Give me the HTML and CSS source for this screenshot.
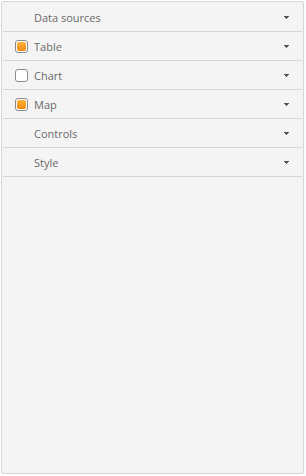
FILE: index.html
```html
<!DOCTYPE html>
<html>
<head>
    <meta name="viewport" content="width=device-width, initial-scale=1.0">
    <link rel="stylesheet" href="styles.css">
    <title>Panel</title>
</head>
<body>
    <div class="panel">
        <div class="row">
            <span class="label no-check">Data sources</span>
            <svg class="arrow" width="5" height="3" viewBox="0 0 5 3" shape-rendering="crispEdges"><rect x="0" y="0" width="5" height="1"/><rect x="1" y="1" width="3" height="1"/><rect x="2" y="2" width="1" height="1"/></svg>
        </div>
        <div class="row">
            <span class="check on"></span>
            <span class="label">Table</span>
            <svg class="arrow" width="5" height="3" viewBox="0 0 5 3" shape-rendering="crispEdges"><rect x="0" y="0" width="5" height="1"/><rect x="1" y="1" width="3" height="1"/><rect x="2" y="2" width="1" height="1"/></svg>
        </div>
        <div class="row">
            <span class="check"></span>
            <span class="label">Chart</span>
            <svg class="arrow" width="5" height="3" viewBox="0 0 5 3" shape-rendering="crispEdges"><rect x="0" y="0" width="5" height="1"/><rect x="1" y="1" width="3" height="1"/><rect x="2" y="2" width="1" height="1"/></svg>
        </div>
        <div class="row">
            <span class="check on"></span>
            <span class="label">Map</span>
            <svg class="arrow" width="5" height="3" viewBox="0 0 5 3" shape-rendering="crispEdges"><rect x="0" y="0" width="5" height="1"/><rect x="1" y="1" width="3" height="1"/><rect x="2" y="2" width="1" height="1"/></svg>
        </div>
        <div class="row">
            <span class="label no-check">Controls</span>
            <svg class="arrow" width="5" height="3" viewBox="0 0 5 3" shape-rendering="crispEdges"><rect x="0" y="0" width="5" height="1"/><rect x="1" y="1" width="3" height="1"/><rect x="2" y="2" width="1" height="1"/></svg>
        </div>
        <div class="row">
            <span class="label no-check">Style</span>
            <svg class="arrow" width="5" height="3" viewBox="0 0 5 3" shape-rendering="crispEdges"><rect x="0" y="0" width="5" height="1"/><rect x="1" y="1" width="3" height="1"/><rect x="2" y="2" width="1" height="1"/></svg>
        </div>
    </div>
</body>
</html>
```

FILE: styles.css
```css
body {
    margin: 0;
    padding: 1px;
    background-color: #ffffff;
    font-family: "Open Sans", "DejaVu Sans", sans-serif;
}

.panel {
    width: 299px;
    height: 470px;
    padding: 1px 1px 0 1px;
    background-color: #f4f4f4;
    border: 1px solid #d6d6d6;
    border-radius: 2px;
}

.row {
    display: flex;
    align-items: center;
    height: 28px;
    border-bottom: 1px solid #d6d6d6;
    padding: 0 13px 0 12px;
}

.check {
    width: 11px;
    height: 11px;
    border: 1px solid #8a8a8a;
    border-radius: 3px;
    background-color: #ffffff;
    margin-right: 6px;
    position: relative;
}

.check.on::after {
    content: "";
    position: absolute;
    left: 1px;
    top: 1px;
    right: 1px;
    bottom: 1px;
    border-radius: 2px;
    background: linear-gradient(#fbb23c, #f58a0f);
}

.label {
    flex: 1;
    font-size: 11px;
    color: #6a6a6a;
}

.no-check {
    padding-left: 19px;
}

.arrow {
    fill: #555555;
}
```
